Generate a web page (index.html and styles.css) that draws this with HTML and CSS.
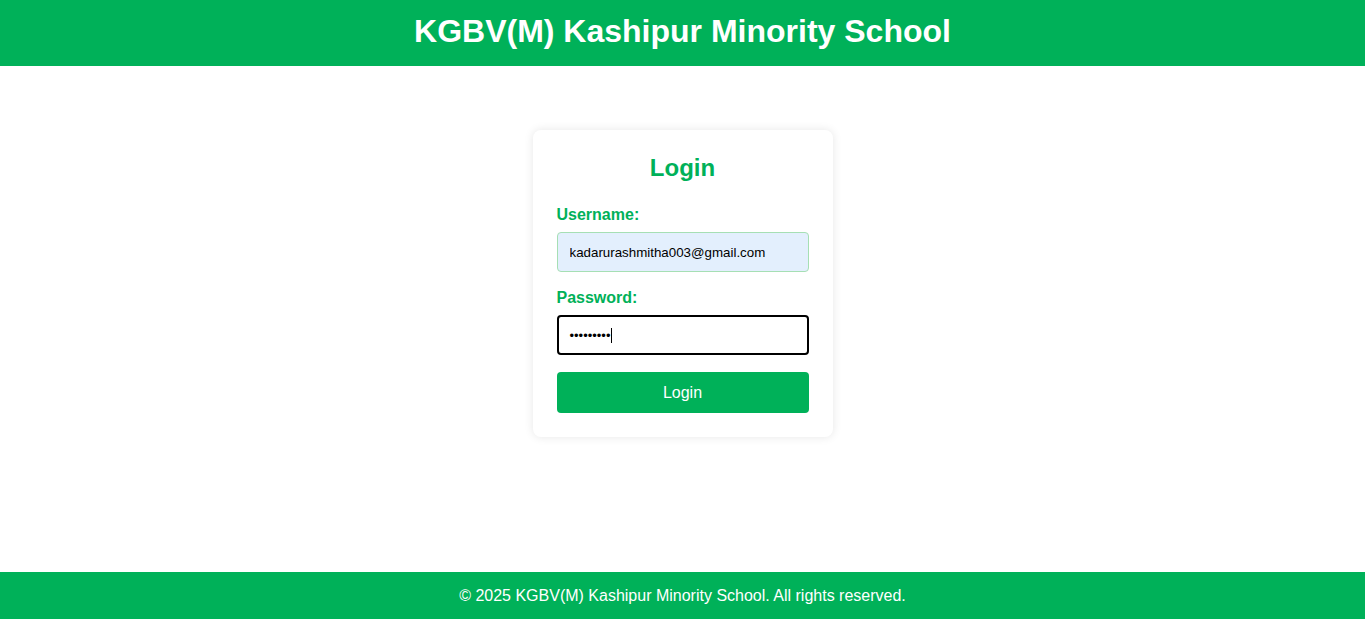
FILE: index.html
```html
<!DOCTYPE html>
<html lang="en">
<head>
<meta charset="utf-8">
<title>KGBV(M) Kashipur Minority School</title>
<link rel="stylesheet" href="styles.css">
</head>
<body>
<header class="site-header">
  <h1 class="site-title">KGBV(M) Kashipur Minority School</h1>
</header>
<main class="main">
  <form class="card">
    <h2 class="card-title">Login</h2>
    <label class="label" for="u">Username:</label>
    <input class="input input-filled" id="u" type="text" value="kadarurashmitha003@gmail.com">
    <label class="label" for="p">Password:</label>
    <div class="input input-focus"><span class="dots">•••••••••</span><span class="caret"></span></div>
    <button class="btn" type="button">Login</button>
  </form>
</main>
<footer class="site-footer">© 2025 KGBV(M) Kashipur Minority School. All rights reserved.</footer>
</body>
</html>
```
FILE: styles.css
```css
* { box-sizing: border-box; }
html, body { height: 100%; }
body {
  margin: 0;
  font-family: "Liberation Sans", Arial, sans-serif;
  display: flex;
  flex-direction: column;
  min-height: 100vh;
  background: #fff;
}
.site-header {
  background: #00b159;
  height: 66px;
  display: flex;
  align-items: center;
  justify-content: center;
  padding-bottom: 4px;
}
.site-title {
  margin: 0;
  color: #fff;
  font-size: 32px;
  font-weight: bold;
  line-height: 1;
}
.main {
  flex: 1;
  display: flex;
  justify-content: center;
  align-items: flex-start;
  padding-top: 64px;
}
.card {
  width: 300px;
  padding: 24px;
  background: #fff;
  border-radius: 8px;
  box-shadow: 0 0 10px rgba(0, 0, 0, 0.1);
  display: flex;
  flex-direction: column;
}
.card-title {
  margin: 0 0 24px;
  color: #00b159;
  font-size: 24px;
  line-height: 28px;
  text-align: center;
}
.label {
  display: block;
  color: #00b159;
  font-weight: bold;
  font-size: 16px;
  line-height: 18px;
  margin-bottom: 8px;
}
.input {
  width: 252px;
  height: 40px;
  border-radius: 4px;
  font-family: "Liberation Sans", Arial, sans-serif;
  font-size: 13.33px;
  color: #000;
  margin: 0 0 17px;
}
.input-filled {
  background: #e3effd;
  border: 1px solid #a6dfb4;
  padding: 1px 12px 0;
  outline: none;
}
.input-focus {
  border: 2px solid #000;
  display: flex;
  align-items: center;
  padding: 0 11px;
  margin-bottom: 17px;
}
.dots {
  font-size: 13px;
  letter-spacing: 0;
  line-height: 1;
}
.caret {
  width: 1px;
  height: 15px;
  background: #000;
  margin-left: 1px;
}
.btn {
  width: 252px;
  height: 41px;
  border: none;
  border-radius: 4px;
  background: #00b159;
  color: #fff;
  font-family: "Liberation Sans", Arial, sans-serif;
  font-size: 16px;
}
.site-footer {
  background: #00b159;
  color: #fff;
  height: 47px;
  display: flex;
  align-items: center;
  justify-content: center;
  font-size: 16px;
}
```
